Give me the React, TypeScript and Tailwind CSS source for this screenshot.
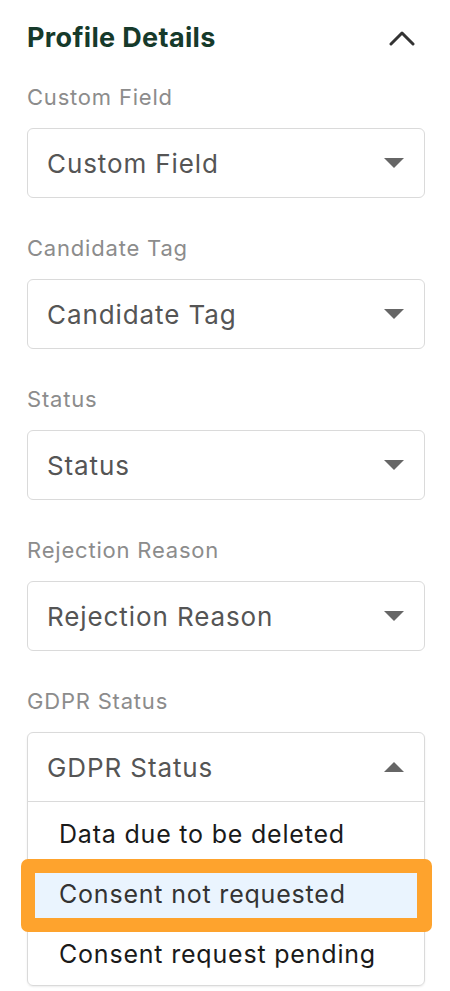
import React from "react";

const fields = ["Custom Field", "Candidate Tag", "Status", "Rejection Reason"];

const gdprOptions = [
  "Data due to be deleted",
  "Consent not requested",
  "Consent request pending",
];

function Caret({ up = false }: { up?: boolean }) {
  return (
    <svg width="20" height="10" viewBox="0 0 20 10" className="shrink-0">
      {up ? <path d="M0 10 L10 0 L20 10 Z" fill="#666666" /> : <path d="M0 0 L20 0 L10 10 Z" fill="#666666" />}
    </svg>
  );
}

export default function App() {
  return (
    <div
      className="min-h-[991px] w-[450px] bg-white pl-[27px] pr-[25px]"
      style={{ fontFamily: "Inter, 'Noto Sans', sans-serif" }}
    >
      {/* Header */}
      <div className="flex h-[32px] items-center justify-between pt-0 mt-[22px]">
        <h2 className="text-[27px] font-bold leading-[32px] tracking-[0.35px] text-[#163a2b]">Profile Details</h2>
        <svg width="26" height="16" viewBox="0 0 26 16" className="mr-[10px]">
          <path d="M2 14 L13 3 L24 14" fill="none" stroke="#333333" strokeWidth="3" strokeLinecap="round" strokeLinejoin="round" />
        </svg>
      </div>

      <div className="mt-[29px] flex flex-col">
        {fields.map((f) => (
          <div key={f} className="mb-[36px]">
            <div className="h-[28px] text-[22px] leading-[28px] tracking-[0.8px] text-[#8c8c8c]">{f}</div>
            <div className="mt-[17px] flex h-[70px] items-center justify-between rounded-[6px] border border-[#dadada] pl-[19px] pr-[20px]">
              <span className="text-[26px] tracking-[0.9px] text-[#555555]">{f}</span>
              <Caret />
            </div>
          </div>
        ))}

        {/* GDPR open select */}
        <div>
          <div className="h-[28px] text-[22px] leading-[28px] tracking-[0.8px] text-[#8c8c8c]">GDPR Status</div>
          <div className="mt-[17px] rounded-[6px] border border-[#dadada] shadow-[0_1px_2px_rgba(0,0,0,0.08)]">
            <div className="flex h-[69px] items-center justify-between border-b border-[#dadada] pl-[19px] pr-[20px]">
              <span className="text-[26px] tracking-[0.9px] text-[#555555]">GDPR Status</span>
              <Caret up />
            </div>
            <ul className="pt-[3px]">
              {gdprOptions.map((o, i) => (
                <li key={o} className="relative flex h-[60px] items-center px-[7px]">
                  {i === 1 && (
                    <div className="absolute left-[-7px] right-[-8px] top-[-6px] h-[73px] rounded-[7px] bg-[#fea32d]" />
                  )}
                  <div
                    className={`relative flex h-[45px] w-full items-center pl-[24px] text-[25px] tracking-[0.8px] ${
                      i === 1 ? "bg-[#eaf4fe] text-[#333333]" : "text-[#1a1a1a]"
                    }`}
                  >
                    {o}
                  </div>
                </li>
              ))}
            </ul>
          </div>
        </div>
      </div>
    </div>
  );
}
